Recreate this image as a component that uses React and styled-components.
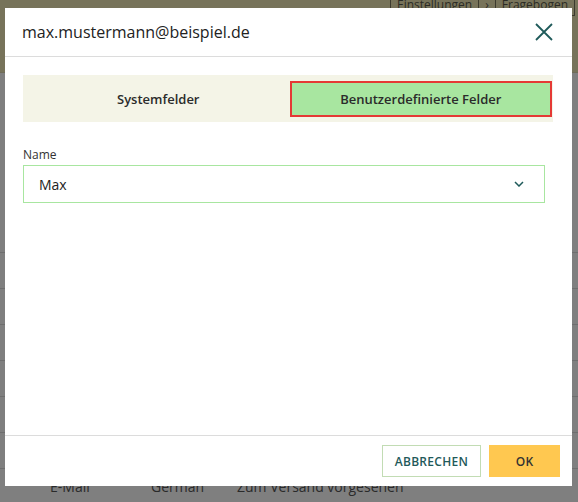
import styled, { createGlobalStyle } from "styled-components";

const Global = createGlobalStyle`
  html, body {
    margin: 0;
    padding: 0;
    background: #7f7f7f;
    font-family: "Open Sans", "Liberation Sans", sans-serif;
  }
`

const Page = styled.div`
  width: 578px;
  height: 502px;
  overflow: hidden;
  background: #7f7f7f;
`

const TopBar = styled.div`
  height: 72px;
  background: #77735a;
  border-bottom: 1px solid #6f6c58;
  display: flex;
  justify-content: flex-end;
  align-items: flex-start;
`

const Crumbs = styled.div`
  display: flex;
  margin-top: -9px;
  margin-right: 3px;
  font-size: 12px;
  color: #2b2b25;
`

const Crumb = styled.div`
  border: 1px solid #3c3a2e;
  padding: 4px 6px 2px;
  & + & { border-left: none; }
`

const Table = styled.div`
  margin-top: 179px;
`

const Row = styled.div`
  height: 35px;
  border-top: 1px solid #6e6e6e;
  display: flex;
  align-items: center;
  font-size: 14px;
  color: #2a2a2a;
`

const Cell = styled.div`
  box-sizing: border-box;
  width: ${p => p.w}px;
  padding-left: ${p => p.pl || 0}px;
`

const Modal = styled.div`
  position: fixed;
  left: 5px;
  top: 8px;
  width: 567px;
  height: 478px;
  background: #fff;
  display: flex;
  flex-direction: column;
`

const Header = styled.div`
  height: 48px;
  border-bottom: 1px solid #dcdcdc;
  display: flex;
  align-items: center;
  justify-content: space-between;
  padding: 0 18px 0 17px;

  h2 {
    margin: 0;
    font-size: 16px;
    font-weight: 400;
    color: #222;
  }
`

const Close = styled.button`
  border: none;
  background: none;
  padding: 0;
  width: 20px;
  height: 20px;
  display: flex;
  cursor: pointer;
`

const Body = styled.div`
  flex: 1;
  padding: 18px 19px 0 18px;
`

const Tabs = styled.div`
  height: 47px;
  box-sizing: border-box;
  background: #f4f4e7;
  display: grid;
  grid-template-columns: 1fr 1fr;
  padding: 6px 1px 5px 4px;
`

const Tab = styled.button`
  border: 2px solid ${p => (p.active ? "#e53935" : "transparent")};
  background: ${p => (p.active ? "#a8e6a0" : "transparent")};
  font-family: "Open Sans", "Liberation Sans", sans-serif;
  font-weight: 600;
  font-size: 13px;
  color: #2b2b2b;
  cursor: pointer;
`

const Label = styled.label`
  display: block;
  margin-top: 24px;
  font-size: 12px;
  color: #333;
`

const Select = styled.div`
  margin-top: 2px;
  margin-right: 8px;
  height: 38px;
  box-sizing: border-box;
  border: 1px solid #a8e6a0;
  display: flex;
  align-items: center;
  justify-content: space-between;
  padding: 0 20px 0 15px;
  font-size: 14px;
  color: #222;
`

const Footer = styled.div`
  height: 50px;
  border-top: 1px solid #dcdcdc;
  display: flex;
  justify-content: flex-end;
  align-items: center;
  gap: 8px;
  padding-right: 12px;
`

const Button = styled.button`
  height: 32px;
  width: ${p => p.w}px;
  box-sizing: border-box;
  font-family: "Open Sans", "Liberation Sans", sans-serif;
  font-weight: 600;
  font-size: 12px;
  letter-spacing: 0.3px;
  text-transform: uppercase;
  cursor: pointer;
  border: ${p => (p.primary ? "none" : "1px solid #c2dcb4")};
  background: ${p => (p.primary ? "#ffc850" : "#fff")};
  color: ${p => (p.primary ? "#333" : "#1f5a5a")};
`

const App = () => {
  return (
    <Page>
      <Global />
      <TopBar>
        <Crumbs>
          <Crumb>Einstellungen</Crumb>
          <Crumb>›</Crumb>
          <Crumb>Fragebogen</Crumb>
        </Crumbs>
      </TopBar>
      <Table>
        <Row />
        <Row />
        <Row />
        <Row />
        <Row />
        <Row />
        <Row>
          <Cell w={151} pl={50}>E-Mail</Cell>
          <Cell w={86}>German</Cell>
          <Cell w={200}>Zum Versand vorgesehen</Cell>
        </Row>
      </Table>

      <Modal>
        <Header>
          <h2>max.mustermann@beispiel.de</h2>
          <Close aria-label="schließen">
            <svg width="20" height="20" viewBox="0 0 20 20">
              <path d="M2 2 L18 18 M18 2 L2 18" stroke="#1f5a5a" strokeWidth="1.8" fill="none" />
            </svg>
          </Close>
        </Header>
        <Body>
          <Tabs>
            <Tab>Systemfelder</Tab>
            <Tab active>Benutzerdefinierte Felder</Tab>
          </Tabs>
          <Label>Name</Label>
          <Select>
            <span>Max</span>
            <svg width="10" height="6" viewBox="0 0 10 6">
              <path d="M1 1 L5 5 L9 1" stroke="#1f5a5a" strokeWidth="1.5" fill="none" />
            </svg>
          </Select>
        </Body>
        <Footer>
          <Button w={99}>Abbrechen</Button>
          <Button primary w={71}>OK</Button>
        </Footer>
      </Modal>
    </Page>
  )
}

export default App
